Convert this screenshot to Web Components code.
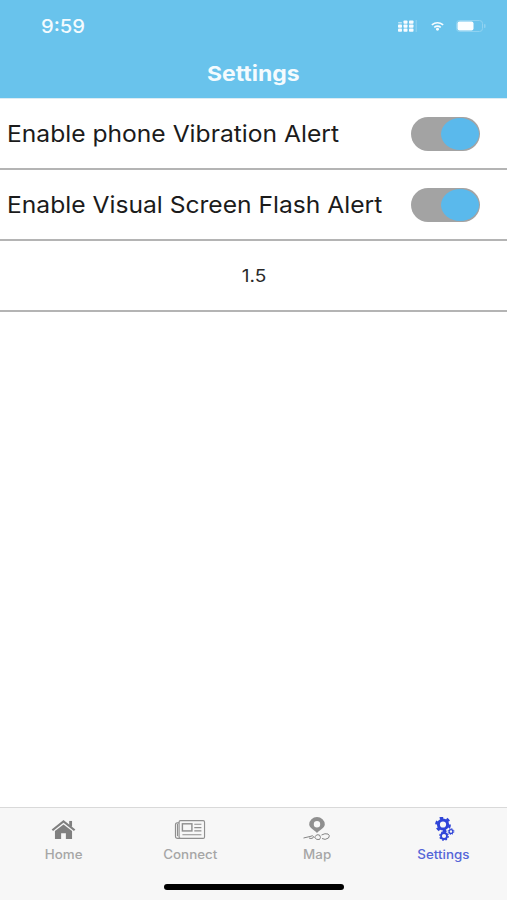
<!DOCTYPE html>
<html>
<head>
<meta charset="utf-8">
<style>
	html, body { margin: 0; padding: 0; background: #fff; }
	body { font-family: 'Liberation Sans', sans-serif; }
</style>
</head>
<body>
<app-screen>
	<nav-header slot="header" time="9:59" title="Settings"></nav-header>
	<setting-row label="Enable phone Vibration Alert"></setting-row>
	<setting-row label="Enable Visual Screen Flash Alert"></setting-row>
	<version-row>1.5</version-row>
	<tab-bar slot="footer">
		<tab-item label="Home" icon="home"></tab-item>
		<tab-item label="Connect" icon="connect"></tab-item>
		<tab-item label="Map" icon="map"></tab-item>
		<tab-item label="Settings" icon="settings" active></tab-item>
	</tab-bar>
</app-screen>

<script>
// the reference is stretched sideways, so text gets a scaleX rather than letter-spacing
class AppScreen extends HTMLElement {
	constructor() {
		super();
		const shadowRoot = this.attachShadow({mode: 'open'});
		shadowRoot.innerHTML = `
			<style>
				:host { display: flex; flex-direction: column; height: 900px; width: 507px; overflow: hidden; }
				main { flex: 1; display: block; }
			</style>
			<slot name="header"></slot>
			<main><slot></slot></main>
			<slot name="footer"></slot>
		`;
	}
}

class NavHeader extends HTMLElement {
	constructor() {
		super();
		const shadowRoot = this.attachShadow({mode: 'open'});
		shadowRoot.innerHTML = `
			<style>
				:host { display: block; height: 98px; background: #69c3ec; color: #f4fbfe; border-bottom: 1px solid #dcecf4; }
				.status { display: flex; align-items: center; justify-content: space-between; height: 50px; padding: 2px 21px 0 41px; box-sizing: border-box; }
				.time { font: 500 18.5px Inter, sans-serif; transform: scaleX(1.09); transform-origin: left center; }
				.icons { display: flex; align-items: center; gap: 13px; }
				.icons svg:last-child { margin-left: -1px; }
				h1 { margin: 0; height: 48px; display: flex; justify-content: center; font: 700 20.5px/48px Inter, sans-serif; }
				h1 span { transform: scaleX(1.12); }
			</style>
			<div class="status">
				<span class="time"></span>
				<div class="icons">
					<svg width="21" height="12" viewBox="0 0 21 12" fill="#f7fcff">
						<rect x="1" y="4.5" width="4" height="3.2" rx=".8"/><rect x="6.5" y="4.5" width="4" height="3.2" rx=".8"/><rect x="12" y="4.5" width="4.5" height="3.2" rx=".8"/>
						<rect x="1" y="8.6" width="4" height="3.2" rx=".8"/><rect x="6.5" y="8.6" width="4" height="3.2" rx=".8"/><rect x="12" y="8.6" width="4.5" height="3.2" rx=".8"/>
						<rect x="6.5" y=".5" width="4" height="3.2" rx=".8"/><rect x="12" y=".5" width="4.5" height="3.2" rx=".8"/>
						<rect x="1" y="2" width="4" height="1.6" rx=".8" opacity=".6"/>
						<rect x="18.5" y="0" width="1.5" height="12" opacity=".2"/>
					</svg>
					<svg width="13" height="10" viewBox="0 0 16 12">
						<path d="M1 4.6 Q8 -.6 15 4.6" fill="none" stroke="#f7fcff" stroke-width="2"/>
						<path d="M4 7.6 Q8 4.6 12 7.6" fill="none" stroke="#f7fcff" stroke-width="2"/>
						<circle cx="8" cy="10" r="1.8" fill="#f7fcff"/>
					</svg>
					<svg width="30" height="12" viewBox="0 0 30 12">
						<rect x=".5" y=".5" width="26" height="11" rx="3" fill="none" stroke="#8fd2f1"/>
						<rect x="1.5" y="1.5" width="16" height="9" rx="2" fill="#fbfeff"/>
						<rect x="28" y="4" width="1.5" height="4" rx=".7" fill="#8fd2f1"/>
					</svg>
				</div>
			</div>
			<h1><span></span></h1>
		`;
		shadowRoot.querySelector('.time').textContent = this.getAttribute('time');
		shadowRoot.querySelector('h1 span').textContent = this.getAttribute('title');
	}
}

class ToggleSwitch extends HTMLElement {
	constructor() {
		super();
		const shadowRoot = this.attachShadow({mode: 'open'});
		shadowRoot.innerHTML = `
			<style>
				:host { display: flex; justify-content: flex-end; align-items: center; box-sizing: border-box; width: 69px; height: 34px; padding: 1px; border-radius: 17px; background: #a3a3a3; }
				span { display: block; width: 38px; height: 32px; border-radius: 50%; background: #5ab9ec; }
			</style>
			<span></span>
		`;
	}
}

class SettingRow extends HTMLElement {
	constructor() {
		super();
		const shadowRoot = this.attachShadow({mode: 'open'});
		shadowRoot.innerHTML = `
			<style>
				:host { display: flex; align-items: center; justify-content: space-between; box-sizing: border-box; height: 71px; padding: 0 27px 0 7px; border-bottom: 2px solid #b4b4b4; }
				span { font: 400 23px Inter, sans-serif; color: #1b1b1b; transform: scaleX(1.07); transform-origin: left center; }
			</style>
			<span></span>
			<toggle-switch></toggle-switch>
		`;
		shadowRoot.querySelector('span').textContent = this.getAttribute('label');
	}
}

class VersionRow extends HTMLElement {
	constructor() {
		super();
		const shadowRoot = this.attachShadow({mode: 'open'});
		shadowRoot.innerHTML = `
			<style>
				:host { display: flex; align-items: center; justify-content: center; box-sizing: border-box; height: 71px; border-bottom: 2px solid #b4b4b4; font: 400 17px Inter, sans-serif; color: #2a2a2a; }
				div { transform: scaleX(1.12); }
			</style>
			<div><slot></slot></div>
		`;
	}
}

class TabBar extends HTMLElement {
	constructor() {
		super();
		const shadowRoot = this.attachShadow({mode: 'open'});
		shadowRoot.innerHTML = `
			<style>
				:host { display: block; position: relative; box-sizing: border-box; height: 93px; background: #f7f7f7; border-top: 1px solid #d9d9d9; }
				.tabs { display: grid; grid-template-columns: repeat(4, 1fr); padding: 6px 0 0 0; }
				.indicator { position: absolute; left: 164px; top: 76px; width: 180px; height: 6px; border-radius: 3px; background: #000; }
			</style>
			<div class="tabs"><slot></slot></div>
			<div class="indicator"></div>
		`;
	}
}

const tabIcons = {
	home: `<svg width="25" height="19" viewBox="0 0 26 20" fill="#808080">
		<path d="M13 0 L25.5 10 L24 11.6 L13 3 L2 11.6 L.5 10 Z"/>
		<path d="M13 4.8 L22 11.6 V20 H15.5 V14 H10.5 V20 H4 V11.6 Z"/>
		<rect x="19" y="1" width="3" height="6"/>
	</svg>`,
	connect: `<svg width="32" height="19" viewBox="0 0 32 20" fill="none" stroke="#8f8f8f" stroke-width="1.2">
		<rect x="4.5" y=".7" width="26.8" height="18.6" rx="1.5"/>
		<path d="M4.5 3 H2.5 Q.7 3 .7 5 V17 Q.7 19.3 3 19.3 H6"/>
		<path d="M2.8 4 V17"/>
		<rect x="8" y="4" width="10" height="7.5" stroke-width="1.5"/>
		<path d="M20.5 4.5 H28 M20.5 8 H28 M20.5 11.5 H28 M8 15.5 H28"/>
	</svg>`,
	map: `<svg width="28" height="24" viewBox="0 0 28 24" fill="none" stroke="#858585">
		<path fill-rule="evenodd" stroke="none" fill="#8f8f8f" d="M14 0 A7.8 7.4 0 0 1 21.8 7.4 C21.8 10.5 17 12.5 14 16 C11 12.5 6.2 10.5 6.2 7.4 A7.8 7.4 0 0 1 14 0 Z M14 4 A3.2 3.2 0 1 0 14 10.4 A3.2 3.2 0 1 0 14 4 Z"/>
		<path stroke-width="1" d="M.5 21 L7 19.5 Q10 18 10.5 19.5 Q10.5 21.5 8 21.5 L6 21"/>
		<path stroke-width="1" d="M11.5 20 Q14 16.5 16.5 18 Q18.5 20.5 16.5 22.5 Q13 23.5 11.5 20 Z"/>
		<path stroke-width="1" d="M18.5 18 Q22 16 25 17 Q27.5 18.5 25.5 21 Q22 23.5 19 21.5"/>
	</svg>`,
	settings: `<svg width="22" height="24" viewBox="0 0 22 24" fill="none" stroke="#2f44d8">
		<circle cx="10" cy="7.5" r="4.6" stroke-width="3"/>
		<circle cx="10" cy="7.5" r="6.7" stroke-width="2.4" stroke-dasharray="3.5 3.52"/>
		<circle cx="11" cy="19" r="3" stroke-width="1.8"/>
		<circle cx="11" cy="19" r="4.2" stroke-width="1.3" stroke-dasharray="1.7 1.6"/>
		<circle cx="18" cy="14.5" r="1.9" stroke-width="1.3"/>
		<circle cx="18" cy="14.5" r="2.9" stroke-width="1" stroke-dasharray="1.2 1.08"/>
	</svg>`
};

class TabItem extends HTMLElement {
	constructor() {
		super();
		const shadowRoot = this.attachShadow({mode: 'open'});
		shadowRoot.innerHTML = `
			<style>
				:host { display: flex; flex-direction: column; align-items: center; color: #a6a6a6; }
				:host([active]) { color: #5565d8; }
				.icon { display: flex; align-items: center; justify-content: center; height: 30px; }
				span { margin-top: 3px; font: 500 12.5px/16px Inter, sans-serif; transform: scaleX(1.07); }
			</style>
			<div class="icon">${tabIcons[this.getAttribute('icon')]}</div>
			<span></span>
		`;
		shadowRoot.querySelector('span').textContent = this.getAttribute('label');
	}
}

customElements.define('app-screen', AppScreen);
customElements.define('nav-header', NavHeader);
customElements.define('toggle-switch', ToggleSwitch);
customElements.define('setting-row', SettingRow);
customElements.define('version-row', VersionRow);
customElements.define('tab-bar', TabBar);
customElements.define('tab-item', TabItem);
</script>
</body>
</html>
